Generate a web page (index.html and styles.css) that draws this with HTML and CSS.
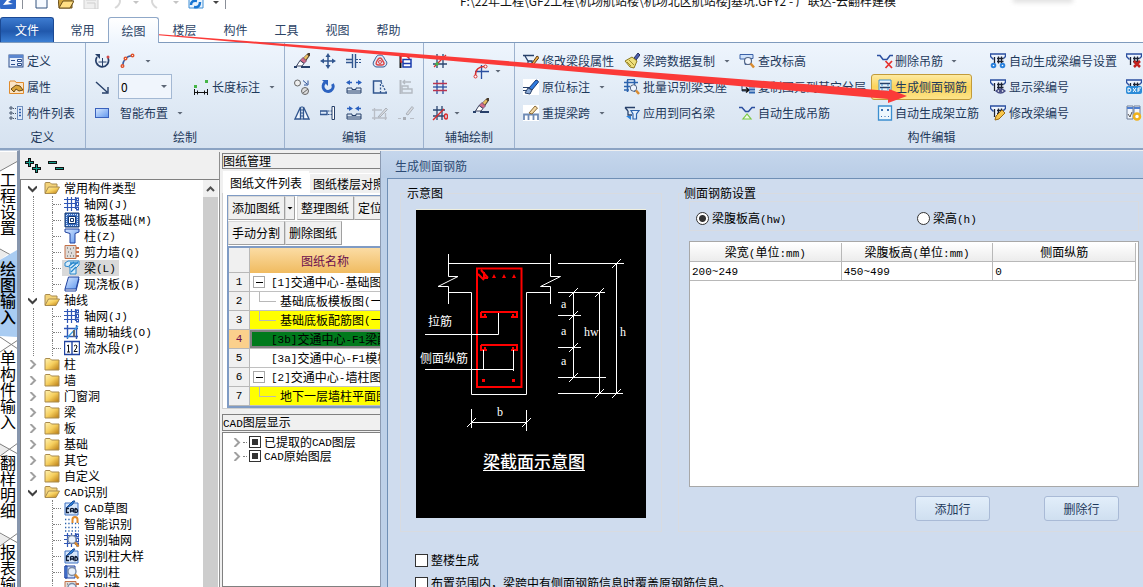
FILE: index.html
```html
<!DOCTYPE html>
<html lang="zh-CN">
<head>
<meta charset="utf-8">
<title>云翻样建模</title>
<link rel="stylesheet" href="styles.css">
</head>
<body>
<svg class="defs" aria-hidden="true">
  <defs>
    <linearGradient id="gGold" x1="0" y1="0" x2="1" y2="1"><stop offset="0" stop-color="#fff3b4"/><stop offset=".5" stop-color="#f6cf5e"/><stop offset="1" stop-color="#b87a12"/></linearGradient>
    <linearGradient id="gBlue" x1="0" y1="0" x2="1" y2="1"><stop offset="0" stop-color="#d8e8ff"/><stop offset="1" stop-color="#5f97ee"/></linearGradient>
  </defs>
  <symbol id="folder" viewBox="0 0 16 16"><path d="M1 3.500q0-1 1-1h4l1.500 1.500H15V14H1z" fill="url(#gGold)" stroke="#a98b4e"/></symbol>
  <symbol id="folder-open" viewBox="0 0 16 16"><path d="M1 13V3.500q0-1 1-1h4L7.500 4H13v3" fill="#f3d37a" stroke="#a98b4e"/><path d="M1 13.500 4.500 7H15.500L12 13.500z" fill="url(#gGold)" stroke="#a98b4e"/></symbol>
  <symbol id="define" viewBox="0 0 16 16"><rect x="1" y="2" width="14" height="12" fill="#e6eefb" stroke="#2d4f8c"/><path d="M1 3.500H15" stroke="#5b86cf" stroke-width="3"/><path d="M3 7.500H7M3 11.500H7" stroke="#2d4f8c"/><path d="M9.500 6.500h4v2h-4zM9.500 10.500h4v2h-4z" fill="#fff" stroke="#2d4f8c"/></symbol>
  <symbol id="prop" viewBox="0 0 16 16"><path d="M1.500 3V14.500H15.500V3.500H8L7 2H2z" fill="#fbe4c4" stroke="#e08b2c"/><path d="M3 10 8 6l4 1 3 4-4 1-3-2-2 3z" fill="#d9a43a" stroke="#6b4b18"/></symbol>
  <symbol id="list" viewBox="0 0 16 16"><path d="M2 2h2v2H2zM2 7h2v2H2zM2 12h2v2H2z" fill="none" stroke="#44546c"/><path d="M5 3.500h3M5 8.500h3M5 13.500h3" stroke="#44546c" stroke-dasharray="1 1"/><rect x="9.500" y="1.500" width="5" height="13" fill="#dfeafa" stroke="#6f8fbe"/><path d="M11 4.500h2M11 7.500h2M11 10.500h2" stroke="#2d5ca8" stroke-width="1.500"/></symbol>
  <symbol id="rotpt" viewBox="0 0 16 16"><path d="M3 4A6.300 6.300 0 1 0 14 5" fill="none" stroke="#27406a" stroke-width="1.700"/><path d="M1 1h5v5z" fill="#27406a"/><path d="M8.500 5v8M4.500 9h8" stroke="#27406a"/><circle cx="14" cy="4" r="1.500" fill="#d24c4c"/></symbol>
  <symbol id="arc" viewBox="0 0 16 16"><path d="M2.500 13.500C3 7 6 3 12.500 2.500" fill="none" stroke="#3c5da0" stroke-width="1.500"/><g fill="#fff" stroke="#e0532c" stroke-width="1.400"><circle cx="2.500" cy="13" r="1.300"/><circle cx="5.500" cy="5.500" r="1.300"/><circle cx="12.500" cy="2.500" r="1.300"/></g></symbol>
  <symbol id="line" viewBox="0 0 16 16"><path d="M2 3 13 13M14 8v6H8" fill="none" stroke="#27406a" stroke-width="1.400"/></symbol>
  <symbol id="rect" viewBox="0 0 16 16"><rect x="1.500" y="3.500" width="13" height="9" fill="url(#gBlue)" stroke="#3a62bd"/></symbol>
  <symbol id="dim" viewBox="0 0 16 16"><path d="M1.500 10v6M14.500 10v6M2 13.500h12M4.500 11.500v4M11.500 11.500v4" stroke="#111"/><path d="M1 6h3v3H1zM12 1h3v3h-3z" fill="#46b648"/></symbol>
  <symbol id="brush" viewBox="0 0 16 16"><path d="M0 14h3M7 14h9" stroke="#27406a" stroke-width="2"/><path d="M9 5 14 0h2v2.500L12 8z" fill="#4a3c2c"/><path d="M9.500 5 13 1.500l1.500 1.500L11.500 7z" fill="#e9bf62"/><path d="M6 7.500 9 4.500 12.500 8 10 10.500z" fill="#d46a86" stroke="#54406a" stroke-width=".700"/><path d="M6 7.500 2.500 13H8l2-2.500z" fill="#fff" stroke="#3c4560"/></symbol>
  <symbol id="move" viewBox="0 0 16 16"><path d="M8 2v12M2 8h12" stroke="#31568f" stroke-width="1.500"/><path d="M8 0 5.500 4h5zM8 16l-2.500-4h5zM0 8l4-2.500v5zM16 8l-4-2.500v5z" fill="#31568f"/></symbol>
  <symbol id="trim" viewBox="0 0 16 16"><path d="M6.500 1v14M9.500 1v14M0 6.500h6M0 9.500h6" stroke="#31568f" stroke-width="1.400"/><path d="M10 6.500h6M10 9.500h6" stroke="#31568f" stroke-dasharray="2 1"/></symbol>
  <symbol id="offset" viewBox="0 0 16 16"><path d="M8 2C12 2 12 6 14 8s0 6-3 6H5c-3 0-5-3-3-6S4 2 8 2z" fill="#dce9f8" stroke="#31568f"/><path d="M8 5c2 0 2 2 3.500 4s0 3-2 3h-3c-2 0-3-1-2-3S6 5 8 5z" fill="none" stroke="#e04343" stroke-width="1.400"/><circle cx="8" cy="9" r="1.500" fill="none" stroke="#e04343"/></symbol>
  <symbol id="align" viewBox="0 0 16 16"><path d="M2.500 0v15" stroke="#111" stroke-width="2"/><path d="M3 3h5l3 2v4H3z" fill="#fff" stroke="#e02a2a" stroke-width="1.500"/><path d="M5 6.500h8v7.500H5zM5 10.500h8" fill="#fff" stroke="#1a3cae" stroke-width="1.500"/></symbol>
  <symbol id="align-off" viewBox="0 0 16 16"><path d="M2.500 1v14" stroke="#b4bac2" stroke-width="2"/><path d="M5 3h8M7 1 5 3l2 2M4 7h6v3H4zM4 10h10v4H4z" fill="none" stroke="#b4bac2" stroke-width="1.400"/></symbol>
  <symbol id="copy" viewBox="0 0 16 16"><circle cx="3.500" cy="4" r="3" fill="#eee" stroke="#666"/><circle cx="11" cy="12" r="3.500" fill="#ddd" stroke="#666"/><path d="M9 14 14 10" stroke="#666"/><path d="M9 1.500 13 5M14 1.500V6H10" fill="none" stroke="#2d5196"/></symbol>
  <symbol id="rotate" viewBox="0 0 16 16"><path d="M5 3.500A5 5 0 1 0 12.500 5" fill="none" stroke="#2c62c0" stroke-width="3"/><path d="M2 1h6v6z" fill="#2c62c0"/></symbol>
  <symbol id="stretch" viewBox="0 0 16 16"><path d="M1 3.500h5M10 3.500h5" stroke="#2c62c0" stroke-width="1.500"/><path d="M0 3.500 4 1v5zM16 3.500 12 1v5z" fill="#2c62c0"/><path d="M1 9h5v1.500h4V9h5v5H1zM1 12h14" fill="none" stroke="#27406a"/></symbol>
  <symbol id="merge" viewBox="0 0 16 16"><path d="M1 3.500h4M11 3.500h4" stroke="#2c62c0" stroke-width="1.500"/><path d="M7 3.500 3 1v5zM9 3.500 13 1v5z" fill="#2c62c0"/><path d="M1 9h5v1.500h4V9h5v5H1zM1 12h14" fill="none" stroke="#27406a"/></symbol>
  <symbol id="slant" viewBox="0 0 16 16"><path d="M10 2H1.500V14H15" fill="none" stroke="#31568f" stroke-width="1.500"/><path d="M9 3 14.500 14M8.500 5v9" stroke="#31568f" stroke-dasharray="2 1.500" stroke-width="1.300"/></symbol>
  <symbol id="mirror" viewBox="0 0 16 16"><path d="M6.500 2v12H1zM9.500 2v12H15z" fill="#f3f8ff" stroke="#31568f" stroke-width="1.300"/><path d="M8 1v15" stroke="#31568f" stroke-dasharray="2 1"/></symbol>
  <symbol id="extend" viewBox="0 0 16 16"><path d="M0 6h7v3.500H0z" fill="#dce9f8" stroke="#31568f" stroke-width="1.400"/><path d="M8 6h4M8 9.500h4" stroke="#31568f" stroke-dasharray="1.500 1"/><path d="M12 1.500h2.500v13H12z" fill="#fff" stroke="#27406a"/></symbol>
  <symbol id="edit-off" viewBox="0 0 16 16"><path d="M0 5h10M0 13h15M2.500 3v12M13.500 8v7" stroke="#b9bec6" stroke-width="1.300"/><path d="M6 12 14 3l1.500 1.500L8 12z" fill="#d8dbe0" stroke="#aab0b9"/></symbol>
  <symbol id="pen-off" viewBox="0 0 16 16"><path d="M0 13.500h3M12 13.500h4" stroke="#b9bec6"/><path d="M5 12h3v3H5z" fill="#a9aeb6"/><path d="M8 9 14 1.500 15.500 3 10 10z" fill="#d8dbe0" stroke="#aab0b9"/></symbol>
  <symbol id="axis1" viewBox="0 0 16 16"><path d="M5 1v14M11 1v14M1 5h14M1 11h14" stroke="#2b4570" stroke-width="1.300"/><path d="M2 14 14 2" stroke="#d92d2d" stroke-width="1.300"/><circle cx="5" cy="11" r="1.700" fill="#46b648"/><circle cx="11" cy="5" r="1.700" fill="#46b648"/></symbol>
  <symbol id="axis2" viewBox="0 0 16 16"><path d="M5 1v14M11 1v14" stroke="#2b4fa0" stroke-width="1.300"/><path d="M1 4.500h14M1 11.500h14" stroke="#b93450" stroke-width="1.500"/><path d="M1 8h14" stroke="#2b4fa0" stroke-width="1.300"/></symbol>
  <symbol id="axis3" viewBox="0 0 16 16"><path d="M5 1v14M10 1v14M1 5h12M1 11h12" stroke="#2b4570" stroke-width="1.300"/><path d="M1 15 12 4" stroke="#d92d2d" stroke-width="1.500"/><ellipse cx="14" cy="11.500" rx="1.500" ry="2.500" fill="none" stroke="#d92d2d" stroke-width="1.400"/></symbol>
  <symbol id="axis4" viewBox="0 0 16 16"><path d="M8.500 2v14M2 8.500h14" stroke="#2b4fa0" stroke-width="1.300"/><path d="M2.500 13C2 7 6 3 12 3.500" fill="none" stroke="#d92d2d" stroke-width="1.400"/><circle cx="2.500" cy="13.500" r="1.500" fill="#fff" stroke="#d92d2d"/><circle cx="12.500" cy="3.500" r="1.500" fill="#fff" stroke="#d92d2d"/></symbol>
  <symbol id="beam-pen" viewBox="0 0 16 16"><path d="M0 2.500h11M2 3l3 5h4v6M5 8v6" fill="#a9dcf8" stroke="#27406a" stroke-width="1.300"/><path d="M7 13 14 3l2 1.500L9 13.500z" fill="#f0b04a" stroke="#5d3b14"/></symbol>
  <symbol id="mark-pen" viewBox="0 0 16 16"><path d="M0 0h16v16H0z" fill="#fff"/><path d="M6 9 13 1q2 0 2.500 2L9 11z" fill="#2e7be0" stroke="#17356e"/><path d="M0 8.500h6M0 11.500h5" stroke="#27406a" stroke-width="1.200"/><path d="M5 9l4 2-2 4-5-1z" fill="#8aa9d6" stroke="#27406a"/></symbol>
  <symbol id="span-pen" viewBox="0 0 16 16"><path d="M0 0h16v16H0z" fill="#fff"/><path d="M1 15V9.500h14V15M5.500 10v5M10.500 10v5" fill="none" stroke="#6f8bb5" stroke-width="1.800"/><path d="M6 8 12 1l2.500 2L9 9z" fill="#f3d9a4" stroke="#8b6a36"/></symbol>
  <symbol id="broom" viewBox="0 0 16 16"><path d="M10 5 14 0l2 2-4 5z" fill="#4b5fae" stroke="#27305e"/><path d="M1 8 8 4l5 4-3 7-4-1z" fill="#efe07c" stroke="#8d7a20"/><path d="M3 9l4 4M5 7l5 5" stroke="#a08c2e"/></symbol>
  <symbol id="beam-zoom" viewBox="0 0 16 16"><path d="M1 1.500h13v4H11v6H6V6H1z" fill="#cfe2fb" stroke="#3b62a8"/><circle cx="9" cy="8" r="3.500" fill="#f2f7ff" stroke="#566886" stroke-width="1.200"/><path d="M11.500 10.500 15 14.500" stroke="#d98b2f" stroke-width="2.500"/></symbol>
  <symbol id="batch" viewBox="0 0 16 16"><path d="M0 3.500h14M3 .500h8M3.500 1v12M10.500 1v12M0 7.500h6M0 11h5" stroke="#2b63ae" stroke-width="1.600" fill="none"/><circle cx="9.500" cy="9" r="3.200" fill="#eef5ff" stroke="#566886"/><path d="M12 11.500 15 15" stroke="#d98b2f" stroke-width="2.500"/></symbol>
  <symbol id="apply" viewBox="0 0 16 16"><path d="M1 2.500h10M1 2.500 4 6M4 6v4h4" fill="none" stroke="#27406a" stroke-width="1.300"/><path d="M7 5.500h8L12.500 9v5H9V9z" fill="#e3effd" stroke="#2b63ae" stroke-width="1.200"/><path d="M2 11l5 4v-4z" fill="#2b82dd"/></symbol>
  <symbol id="copy-floor" viewBox="0 0 16 16"><path d="M1 2h9v4H1zM3 6v6h5" fill="#e3effd" stroke="#27406a"/><path d="M3 11h6M7 8.500 10 11 7 13.500" fill="none" stroke="#111" stroke-width="1.500"/><path d="M10 7.500h6M10 10.500h6M10 13.500h6" stroke="#2b63ae" stroke-width="2"/></symbol>
  <symbol id="hanger" viewBox="0 0 16 16"><path d="M0 2.500h3l3.500 4h3L13 2.500h3" fill="none" stroke="#2b4fa0" stroke-width="1.500"/><path d="M8 9 4 14h8z" fill="#effae8" stroke="#7ac943" stroke-width="1.200"/></symbol>
  <symbol id="hanger-del" viewBox="0 0 16 16"><path d="M0 2.500h3l3 4h4L13 2.500h3" fill="none" stroke="#2b4fa0" stroke-width="1.500"/><path d="M8.500 8 15 15M15 8 8.500 15" stroke="#e5302c" stroke-width="1.700"/></symbol>
  <symbol id="side" viewBox="0 0 16 16"><path d="M2 1h12v14H2z" fill="#e9f4fd" stroke="#3b8fd0"/><path d="M3 4.500h10M3 8.500h10M4 12.500h8" stroke="#27406a" stroke-width="1.300"/><path d="M4 6h2M10 6h2M4 10h2M10 10h2" stroke="#3b8fd0"/></symbol>
  <symbol id="erect" viewBox="0 0 16 16"><path d="M1.500 1h13v14h-13z" fill="#eef7fd" stroke="#3b8fd0" stroke-width="1.300"/><path d="M4 4h2v2H4zM10 4h2v2h-2zM4 11h1v1H4zM7.500 11h1v1h-1zM11 11h1v1h-1z" fill="#3b6fb0"/></symbol>
  <symbol id="num" viewBox="0 0 16 16"><path d="M0 1h16v3l-3 3v4H3V7L0 4z" fill="#eef5fe"/><path d="M0 1h16M.500 1v2.500l3 3M15.500 1v2.500l-2 2" fill="none" stroke="#2b4fa0" stroke-width="1.400"/><path d="M4.500 4v8M8.500 3.500v7M11.500 3.500v7M7 5.500h6.500M7 8.500h6.500" stroke="#1b2233" stroke-width="1.300"/></symbol>
  <symbol id="gears" viewBox="0 0 16 16"><g fill="#fff" stroke="#2b82dd" stroke-width="2"><circle cx="3.500" cy="12.500" r="1.800"/><circle cx="12.500" cy="12.500" r="1.800"/></g></symbol>
  <symbol id="eye" viewBox="0 0 16 16"><path d="M6 12q4.500-4 9 0-4.500 4-9 0z" fill="#fff" stroke="#474d86" stroke-width="1.300"/><circle cx="10.500" cy="12" r="1.600" fill="#474d86"/></symbol>
  <symbol id="pencil" viewBox="0 0 16 16"><path d="M5 15l1-4 6-6 3 3-6 6z" fill="#f7c64c" stroke="#9a6b14"/></symbol>
  <symbol id="cross" viewBox="0 0 16 16"><path d="M8 8l6 6M14 8l-6 6" stroke="#c2211d" stroke-width="2.500"/></symbol>
  <symbol id="config" viewBox="0 0 16 16"><path d="M1 1h6v13H1zM8 1h6v9H8z" fill="#f2f6fc" stroke="#6f7f99"/><path d="M1 2h6v2H1zM8 2h6v2H8z" fill="#4f7fd0"/><path d="M2 9l2 3 2-5" fill="none" stroke="#555"/><circle cx="11" cy="11.500" r="3" fill="#fff" stroke="#f0b21c" stroke-width="2.500"/></symbol>
  <symbol id="t-grid" viewBox="0 0 16 16"><path d="M3.500 1v14M7.500 1v14M11.500 1v12M0 3.500h13M0 7.500h13M0 11.500h13" stroke="#2f56b5" stroke-width="1.200"/><g fill="#fff" stroke="#2f56b5"><rect x="12.500" y="2" width="2" height="3"/><rect x="12.500" y="6.500" width="2" height="3"/><rect x="12.500" y="11" width="2" height="3"/></g></symbol>
  <symbol id="t-raft" viewBox="0 0 16 16"><path d="M1 1h14v14H1z" fill="#3c70c2" stroke="#13366f"/><path d="M4.500 4.500h7v7h-7z" fill="#fff" stroke="#13366f"/><path d="M6.500 6.500h3v3h-3z" fill="#fff" stroke="#13366f"/><path d="M2.500 3v11M13.500 3v11M3 2.500h11M3 13.500h11" stroke="#d5e5fb" stroke-dasharray="1 1"/></symbol>
  <symbol id="t-col" viewBox="0 0 16 16"><path d="M1 1h14v3l-4 1.500V15H6V5.500L1 4z" fill="url(#gBlue)" stroke="#2143a0"/></symbol>
  <symbol id="t-wall" viewBox="0 0 16 16"><path d="M1 1.500h11v13H1z" fill="#dedbd8" stroke="#c4724a"/><path d="M3 4h1M6 5h1M9 4h1M4 8h1M7 9h1M3 12h1M9 12h1M6 12h1" stroke="#555"/><path d="M12 4h3M12 8h3M12 12h3" stroke="#c4724a" stroke-width="2"/></symbol>
  <symbol id="t-beam" viewBox="0 0 16 16"><path d="M1 3l3-2h11v4l-3 3v6H6V7L1 6z" fill="#d7edfb" stroke="#2786cc"/><path d="M5 6 10 2M7 8l7-6M7 12l5-5M6 3h8" stroke="#2786cc" stroke-width="1.300"/></symbol>
  <symbol id="t-slab" viewBox="0 0 16 16"><path d="M4.500 1H15l-3 12H1z" fill="url(#gBlue)" stroke="#2143a0"/><path d="M1 13v2h11l3-12" fill="none" stroke="#2143a0"/></symbol>
  <symbol id="t-page" viewBox="0 0 16 16"><path d="M1 2h10v12H1z" fill="#cfe0fa" stroke="#2143a0"/><path d="M1 2h2v12H1z" fill="#5f97ee" stroke="#2143a0"/></symbol>
  <symbol id="t-aux" viewBox="0 0 16 16"><path d="M3.500 1v14M12.500 1v14M0 4.500h14M0 12.500h14" stroke="#2f56b5" stroke-width="1.400"/><path d="M3 14 14 2" stroke="#3a9be0" stroke-width="1.300"/><path d="M9 6h2v7H9z" fill="#666"/></symbol>
  <symbol id="t-flow" viewBox="0 0 16 16"><path d="M.500 1.500h15v13H.500zM8 2v12" fill="#fff" stroke="#2143a0" stroke-width="1.400"/><path d="M4.500 5v7M3 6l1.500-1M3 12h3M10 6q2-2 3 0 0 2-3 5.500h3.500" fill="none" stroke="#111"/></symbol>
  <symbol id="t-cad" viewBox="0 0 16 16"><path d="M1 3h13v12H1z" fill="#d6e6fa" stroke="#3c70c2"/><path d="M2 8 9 1l2 0-3 4z" fill="#2b82dd" stroke="#1d4f9a"/><path d="M5 8.500H2.500v4H5M6.500 12.500V9l1.500-.500 1.500.500v3.500M6.500 11h3M11 8.500v4q3 0 2.500-2T11 8.500" fill="none" stroke="#0d1a33" stroke-width="1.300"/></symbol>
  <symbol id="t-smart" viewBox="0 0 16 16"><path d="M1 3.500h6M1 7.500h14M1 11.500h14M1 15h14" stroke="#2b63ae" stroke-width="1.300" stroke-dasharray="1.300 2"/><path d="M8.500 7V3.500a2.500 2.500 0 0 1 5 0V7" fill="none" stroke="#e08b2c" stroke-width="2"/></symbol>
  <symbol id="t-find" viewBox="0 0 16 16"><circle cx="8" cy="7.500" r="4" fill="#e9f2fd" stroke="#7b8ca6" stroke-width="1.400"/><path d="M11 10.500 14.500 14.500" stroke="#d98b2f" stroke-width="2.500"/></symbol>
  <symbol id="plus" viewBox="0 0 9 9"><path d="M3 0h3v3h3v3H6v3H3V6H0V3h3z" fill="#111"/><path d="M4.500 1v7M1 4.500h7" stroke="#159c8c"/></symbol>
</svg>

<header class="titlebar">
  <div class="quick">
    <svg class="i" viewBox="0 0 16 16"><rect width="16" height="17" rx="3" fill="#2f68c8"/><path d="M3 12 10 3l3 3-5 3 5 2z" fill="#fff"/></svg>
    <span class="bar"></span>
    <svg class="i" viewBox="0 0 16 16"><path d="M3 0h11v15H3z" fill="#f6faff" stroke="#33537f"/></svg>
    <svg class="i" viewBox="0 0 16 16"><path d="M0 4h6l2 2h6v9H1z" fill="#cfa43d" stroke="#6b501a"/><path d="M1 15 5 8h11l-4 7z" fill="#ffdf85" stroke="#6b501a"/></svg>
    <svg class="i" viewBox="0 0 16 16"><path d="M1 0h14v16H1zM4 10h8v6M3 7h10" fill="#efefef" stroke="#cfcfcf"/></svg>
    <svg class="i" viewBox="0 0 16 16"><path d="M3 6q8-4 9 2 0 4-5 7" fill="none" stroke="#d8d8d8" stroke-width="2"/></svg>
    <span class="caret pale"></span>
    <svg class="i" viewBox="0 0 16 16"><path d="M13 6Q5 2 4 8q0 4 5 7" fill="none" stroke="#d8d8d8" stroke-width="2"/></svg>
    <span class="caret pale"></span>
    <svg class="i" viewBox="0 0 16 16"><path d="M1 0h14v15H1z" fill="#e9f3fd" stroke="#3f8fd6"/><path d="M6 14q6 1 6-5M9 8q-6-1-6 4" fill="none" stroke="#1976d2" stroke-width="2.500"/></svg>
    <span class="caret dark"></span>
    <span class="bar"></span>
  </div>
  <div class="doc-title">F:\22年工程\GF2工程\机场航站楼\机场北区航站楼j基坑.GFY2 - 广联达-云翻样建模</div>
  <span class="smudge"></span>
</header>

<nav class="tabs">
  <button class="tab file">文件</button>
  <button class="tab">常用</button>
  <button class="tab on">绘图</button>
  <button class="tab">楼层</button>
  <button class="tab">构件</button>
  <button class="tab">工具</button>
  <button class="tab">视图</button>
  <button class="tab">帮助</button>
</nav>

<section class="ribbon">
  <div class="group g-define">
    <div class="cells">
      <button class="cmd"><svg class="i"><use href="#define"/></svg>定义</button>
      <button class="cmd"><svg class="i"><use href="#prop"/></svg>属性</button>
      <button class="cmd"><svg class="i"><use href="#list"/></svg>构件列表</button>
    </div>
    <div class="caption">定义</div>
  </div>
  <div class="group g-draw">
    <div class="cells">
      <button class="cmd" aria-label="旋转点"><svg class="i"><use href="#rotpt"/></svg></button>
      <button class="cmd" aria-label="弧"><svg class="i"><use href="#arc"/></svg><span class="caret"></span></button>
      <span></span>
      <button class="cmd" aria-label="直线"><svg class="i"><use href="#line"/></svg></button>
      <span class="combo"><select aria-label="半径"><option>0</option></select></span>
      <button class="cmd"><svg class="i"><use href="#dim"/></svg>长度标注<span class="caret"></span></button>
      <button class="cmd" aria-label="矩形"><svg class="i"><use href="#rect"/></svg></button>
      <button class="cmd">智能布置<span class="caret"></span></button>
      <span></span>
    </div>
    <div class="caption">绘制</div>
  </div>
  <div class="group g-edit">
    <div class="cells">
      <button class="ico" aria-label="格式刷"><svg class="i"><use href="#brush"/></svg></button>
      <button class="ico" aria-label="移动"><svg class="i"><use href="#move"/></svg></button>
      <button class="ico" aria-label="修剪"><svg class="i"><use href="#trim"/></svg></button>
      <button class="ico" aria-label="偏移"><svg class="i"><use href="#offset"/></svg></button>
      <button class="ico" aria-label="对齐"><svg class="i"><use href="#align"/></svg></button>
      <button class="ico" aria-label="复制"><svg class="i"><use href="#copy"/></svg></button>
      <button class="ico" aria-label="旋转"><svg class="i"><use href="#rotate"/></svg></button>
      <button class="ico" aria-label="打断"><svg class="i"><use href="#stretch"/></svg></button>
      <button class="ico" aria-label="拉伸"><svg class="i"><use href="#slant"/></svg></button>
      <button class="ico" aria-label="单对齐"><svg class="i"><use href="#align-off"/></svg></button>
      <button class="ico" aria-label="镜像"><svg class="i"><use href="#mirror"/></svg></button>
      <button class="ico" aria-label="延伸"><svg class="i"><use href="#extend"/></svg></button>
      <button class="ico" aria-label="合并"><svg class="i"><use href="#merge"/></svg></button>
      <button class="ico" aria-label="编辑"><svg class="i"><use href="#edit-off"/></svg></button>
      <button class="ico" aria-label="夹点"><svg class="i"><use href="#pen-off"/></svg></button>
    </div>
    <div class="caption">编辑</div>
  </div>
  <div class="group g-axis">
    <div class="split">
      <div class="stack">
        <button class="cmd" aria-label="两点辅轴"><svg class="i"><use href="#axis1"/></svg></button>
        <button class="cmd" aria-label="平行辅轴"><svg class="i"><use href="#axis2"/></svg></button>
        <button class="cmd" aria-label="点角辅轴"><svg class="i"><use href="#axis3"/></svg><span class="caret"></span></button>
      </div>
      <div class="stack tall">
        <button class="cmd" aria-label="弧形辅轴"><svg class="i"><use href="#axis4"/></svg><span class="caret"></span></button>
        <button class="cmd" aria-label="删除辅轴"><svg class="i"><use href="#brush"/></svg></button>
      </div>
    </div>
    <div class="caption">辅轴绘制</div>
  </div>
  <div class="group g-member">
    <div class="cells">
      <button class="cmd"><svg class="i"><use href="#beam-pen"/></svg>修改梁段属性</button>
      <button class="cmd"><svg class="i"><use href="#broom"/></svg>梁跨数据复制<span class="caret"></span></button>
      <button class="cmd"><svg class="i"><use href="#beam-zoom"/></svg>查改标高</button>
      <button class="cmd wide"><svg class="i"><use href="#hanger-del"/></svg>删除吊筋<span class="caret"></span></button>
      <button class="cmd"><svg class="i"><use href="#num"/><use href="#gears"/></svg>自动生成梁编号设置</button>
      <button class="cmd" aria-label="删除梁编号"><svg class="i"><use href="#num"/><use href="#cross"/></svg></button>
      <button class="cmd"><svg class="i"><use href="#mark-pen"/></svg>原位标注<span class="caret"></span></button>
      <button class="cmd"><svg class="i"><use href="#batch"/></svg>批量识别梁支座</button>
      <button class="cmd"><svg class="i"><use href="#copy-floor"/></svg>复制图元到其它分层</button>
      <button class="cmd wide on"><svg class="i"><use href="#side"/></svg>生成侧面钢筋</button>
      <button class="cmd"><svg class="i"><use href="#num"/><use href="#eye"/></svg>显示梁编号</button>
      <button class="cmd" aria-label="导出DXF"><svg class="i" viewBox="0 0 16 16"><use href="#num" width="16" height="16"/><rect y="7" width="16" height="8" rx="2" fill="#2b8bd8"/><path d="M2 9v4q3 0 3-2T2 9M7 9l3 4M10 9l-3 4M12 13V9h3M12 11h2" fill="none" stroke="#fff"/></svg></button>
      <button class="cmd"><svg class="i"><use href="#span-pen"/></svg>重提梁跨<span class="caret"></span></button>
      <button class="cmd"><svg class="i"><use href="#apply"/></svg>应用到同名梁</button>
      <button class="cmd"><svg class="i"><use href="#hanger"/></svg>自动生成吊筋</button>
      <button class="cmd wide"><svg class="i"><use href="#erect"/></svg>自动生成架立筋</button>
      <button class="cmd"><svg class="i"><use href="#num"/><use href="#pencil"/></svg>修改梁编号</button>
      <button class="cmd" aria-label="配置"><svg class="i"><use href="#config"/></svg></button>
    </div>
    <div class="caption">构件编辑</div>
  </div>
</section>

<main class="work">
  <nav class="vtabs">
    <svg class="vlines" width="18" height="440" viewBox="0 150 18 440"><path d="M0 152h18v9L0 171zM0 249l8 5-8 6zM0 443l10 6-10 6zM0 534l10 5-10 6z" fill="#ececec"/><path d="M18 161 0 171M0 249l18 10M0 337l18 12M18 340 0 352M0 444l18 10M18 443 0 456M0 533l18 10M18 533 0 546" fill="none" stroke="#808080"/></svg>
    <button class="vtab">工程设置</button>
    <button class="vtab on">绘图输入</button>
    <button class="vtab">单构件输入</button>
    <button class="vtab">翻样明细</button>
    <button class="vtab">报表输出</button>
  </nav>

  <aside class="members">
    <div class="mini-bar">
      <button class="pm" aria-label="展开"><svg width="16" height="15" viewBox="0 0 16 15"><use href="#plus" width="9" height="9"/><use href="#plus" x="7" y="6" width="9" height="9"/></svg></button>
      <button class="pm" aria-label="折叠"><svg width="16" height="15" viewBox="0 0 16 15"><path d="M0 3h9v3H0zM7 9h9v3H7z" fill="#111"/><path d="M1 4.500h7M8 10.500h7" stroke="#159c8c"/></svg></button>
    </div>
    <div class="tree-wrap">
      <ul class="tree">
        <li class="open"><div class="row"><svg class="chev" viewBox="0 0 9 9"><path d="M0 2.500 4.500 7 9 2.500" /></svg><svg class="i"><use href="#folder-open"/></svg>常用构件类型</div>
          <ul>
            <li><span class="leaf"><svg class="i"><use href="#t-grid"/></svg>轴网<i>(J)</i></span></li>
            <li><span class="leaf"><svg class="i"><use href="#t-raft"/></svg>筏板基础<i>(M)</i></span></li>
            <li><span class="leaf"><svg class="i"><use href="#t-col"/></svg>柱<i>(Z)</i></span></li>
            <li><span class="leaf"><svg class="i"><use href="#t-wall"/></svg>剪力墙<i>(Q)</i></span></li>
            <li><span class="leaf sel"><svg class="i"><use href="#t-beam"/></svg>梁<i>(L)</i></span></li>
            <li><span class="leaf"><svg class="i"><use href="#t-slab"/></svg>现浇板<i>(B)</i></span></li>
          </ul></li>
        <li class="open"><div class="row"><svg class="chev" viewBox="0 0 9 9"><path d="M0 2.500 4.500 7 9 2.500" /></svg><svg class="i"><use href="#folder-open"/></svg>轴线</div>
          <ul>
            <li><span class="leaf"><svg class="i"><use href="#t-grid"/></svg>轴网<i>(J)</i></span></li>
            <li><span class="leaf"><svg class="i"><use href="#t-aux"/></svg>辅助轴线<i>(O)</i></span></li>
            <li><span class="leaf"><svg class="i"><use href="#t-flow"/></svg>流水段<i>(P)</i></span></li>
          </ul></li>
        <li><div class="row"><svg class="chev shut" viewBox="0 0 9 9"><path d="M2.500 0 7 4.500 2.500 9"/></svg><svg class="i"><use href="#folder"/></svg>柱</div></li>
        <li><div class="row"><svg class="chev shut" viewBox="0 0 9 9"><path d="M2.500 0 7 4.500 2.500 9"/></svg><svg class="i"><use href="#folder"/></svg>墙</div></li>
        <li><div class="row"><svg class="chev shut" viewBox="0 0 9 9"><path d="M2.500 0 7 4.500 2.500 9"/></svg><svg class="i"><use href="#folder"/></svg>门窗洞</div></li>
        <li><div class="row"><svg class="chev shut" viewBox="0 0 9 9"><path d="M2.500 0 7 4.500 2.500 9"/></svg><svg class="i"><use href="#folder"/></svg>梁</div></li>
        <li><div class="row"><svg class="chev shut" viewBox="0 0 9 9"><path d="M2.500 0 7 4.500 2.500 9"/></svg><svg class="i"><use href="#folder"/></svg>板</div></li>
        <li><div class="row"><svg class="chev shut" viewBox="0 0 9 9"><path d="M2.500 0 7 4.500 2.500 9"/></svg><svg class="i"><use href="#folder"/></svg>基础</div></li>
        <li><div class="row"><svg class="chev shut" viewBox="0 0 9 9"><path d="M2.500 0 7 4.500 2.500 9"/></svg><svg class="i"><use href="#folder"/></svg>其它</div></li>
        <li><div class="row"><svg class="chev shut" viewBox="0 0 9 9"><path d="M2.500 0 7 4.500 2.500 9"/></svg><svg class="i"><use href="#folder"/></svg>自定义</div></li>
        <li><div class="row"><svg class="chev" viewBox="0 0 9 9"><path d="M0 2.500 4.500 7 9 2.500" /></svg><svg class="i"><use href="#folder-open"/></svg><i>CAD</i>识别</div>
          <ul>
            <li><span class="leaf"><svg class="i"><use href="#t-cad"/></svg><i>CAD</i>草图</span></li>
            <li><span class="leaf"><svg class="i"><use href="#t-smart"/></svg>智能识别</span></li>
            <li><span class="leaf"><svg class="i"><use href="#t-grid"/><use href="#t-find"/></svg>识别轴网</span></li>
            <li><span class="leaf"><svg class="i"><use href="#t-cad"/></svg>识别柱大样</span></li>
            <li><span class="leaf"><svg class="i"><use href="#t-page"/><use href="#t-find"/></svg>识别柱</span></li>
            <li><span class="leaf"><svg class="i"><use href="#t-wall"/><use href="#t-find"/></svg>识别墙</span></li>
          </ul></li>
      </ul>
      <div class="scroll"><svg width="15" height="17" viewBox="0 0 15 17"><path d="M4 11 7.500 7.500 11 11" fill="none" stroke="#505050" stroke-width="2"/></svg><div class="thumb"></div></div>
    </div>
  </aside>

  <section class="sheets">
    <h2 class="dock-title">图纸管理</h2>
    <div class="sheet-tabs"><button class="st on">图纸文件列表</button><button class="st">图纸楼层对照表</button></div>
    <div class="sheet-body">
      <div class="sheet-tools">
        <div class="tool-row"><button class="tb">添加图纸</button><button class="tb drop" aria-label="更多"><span class="caret black"></span></button><button class="tb gap">整理图纸</button><button class="tb">定位图纸</button></div>
        <div class="tool-row"><button class="tb">手动分割</button><button class="tb">删除图纸</button></div>
      </div>
      <table class="sheet-table">
        <thead><tr><th class="no"></th><th>图纸名称</th></tr></thead>
        <tbody>
          <tr><td class="no">1</td><td><span class="cell"><b class="minus"></b><i>[1]</i>交通中心<i>-</i>基础图</span></td></tr>
          <tr><td class="no">2</td><td><span class="cell sub">基础底板模板图<i>(</i>一<i>)</i></span></td></tr>
          <tr class="y"><td class="no">3</td><td><span class="cell sub">基础底板配筋图<i>(</i>一<i>)</i></span></td></tr>
          <tr class="g"><td class="no">4</td><td><span class="cell flat"><i>[3b]</i>交通中心<i>-F1</i>梁配筋图</span></td></tr>
          <tr><td class="no">5</td><td><span class="cell flat"><i>[3a]</i>交通中心<i>-F1</i>模板图</span></td></tr>
          <tr><td class="no">6</td><td><span class="cell"><b class="minus"></b><i>[2]</i>交通中心<i>-</i>墙柱图</span></td></tr>
          <tr class="y"><td class="no">7</td><td><span class="cell sub">地下一层墙柱平面图</span></td></tr>
        </tbody>
      </table>
    </div>
    <h2 class="dock-title"><i>CAD</i>图层显示</h2>
    <div class="layers">
      <label class="layer"><svg class="chev shut" viewBox="0 0 9 9"><path d="M2.500 0 7 4.500 2.500 9"/></svg><span class="dots"></span><input type="checkbox">已提取的<i>CAD</i>图层</label>
      <label class="layer"><svg class="chev shut" viewBox="0 0 9 9"><path d="M2.500 0 7 4.500 2.500 9"/></svg><span class="dots"></span><input type="checkbox"><i>CAD</i>原始图层</label>
    </div>
  </section>

  <section class="dialog">
    <h1 class="dlg-title">生成侧面钢筋</h1>
    <div class="dlg-body">
      <div class="panes">
        <fieldset class="pane fig">
          <legend>示意图</legend>
          <svg class="figure" viewBox="0 0 230 308" width="230" height="308">
            <rect width="230" height="308" fill="#000"/>
            <g fill="none" stroke="#fff">
              <path d="M32.500 53.500H134.500M32.500 44V66.500H42L22 76.500H32.500V94M134.500 44V66.500H144.500L124.500 76.500H134.500V94"/>
              <path d="M32.500 82.500H55.500V184.500H110.500V82.500H134.500"/>
              <path d="M142 53.500H208M200.500 53V184M142 82.500H189M157.500 82V168M183.500 82V184M142 105.500H165M142 137.500H165M142 167.500H190M142 183.500H207"/>
              <path d="M196 58l9-9M179 87l9-9M153 87l9-9M153 110l9-9M153 142l9-9M153 172l9-9M179 188l9-9M196 188l9-9"/>
              <path d="M55.500 199V218M110.500 200V221M55 212.500H111M51 217l9-9M106 217l9-9"/>
            </g>
            <g fill="none" stroke="red" stroke-width="2">
              <path d="M61 58.500H105.500V177H61zM62 64l6 6M65 60l7 8M68 62v6h4"/>
              <path d="M65 102H102M65 102v5h6M101 102v5h-6M65 135H102M65 135v5h6M101 135v5h-6"/>
            </g>
            <path d="M76 68l2-4 2 4zM86 68l2-4 2 4zM96 68l2-4 2 4zM66 169h3v3h-3zM96 169h3v3h-3zM68 104h2v3h-2zM96 104h2v3h-2zM68 137h2v3h-2zM96 137h2v3h-2z" fill="red"/>
            <path d="M82.500 103V124.500H9M67.500 140V159.500M97.500 140V161M9 159.500H98" fill="none" stroke="#fff"/>
            <g class="fig-text">
              <text x="12" y="116">拉筋</text><text x="4" y="153">侧面纵筋</text>
              <text x="145" y="98">a</text><text x="145" y="125">a</text><text x="145" y="155">a</text>
              <text x="168" y="126">hw</text><text x="204" y="126">h</text><text x="81" y="206">b</text>
            </g>
            <text class="fig-title" x="67" y="258">梁截面示意图</text>
            <path d="M67 260.500H169" stroke="#fff"/>
          </svg>
        </fieldset>
        <fieldset class="pane cfg">
          <legend>侧面钢筋设置</legend>
          <div class="radios">
            <label><input type="radio" name="mode" checked><span>梁腹板高<i>(hw)</i></span></label>
            <label><input type="radio" name="mode"><span>梁高<i>(h)</i></span></label>
          </div>
          <div class="grid-box">
            <table class="rules">
              <thead><tr><th>梁宽<i>(</i>单位<i>:mm)</i></th><th>梁腹板高<i>(</i>单位<i>:mm)</i></th><th class="third">侧面纵筋</th></tr></thead>
              <tbody><tr><td><i>200~249</i></td><td><i>450~499</i></td><td><i>0</i></td></tr></tbody>
            </table>
          </div>
          <div class="actions"><button class="act">添加行</button><button class="act">删除行</button></div>
        </fieldset>
      </div>
      <div class="checks">
        <label><input type="checkbox">整楼生成</label>
        <label><input type="checkbox">布置范围内，梁跨中有侧面钢筋信息时覆盖原钢筋信息。</label>
      </div>
    </div>
  </section>
</main>

<svg class="pointer" width="920" height="120" viewBox="0 0 920 120" aria-hidden="true"><path d="M150 33.500 830 86l59 5v-2l18 7-19 7v-4l-58-5L150 34.500z" fill="#fb3a38"/></svg>
</body>
</html>
```
FILE: styles.css
```css
* { box-sizing: border-box; }
html, body { height: 100%; }
body {
  margin: 0;
  display: flex;
  flex-direction: column;
  position: relative;
  overflow: hidden;
  background: #fff;
  color: #000;
  font: 12px/16px "Noto Sans CJK SC", sans-serif;
}
button, select, input { font: inherit; color: inherit; margin: 0; padding: 0; }
button { border: 0; background: none; white-space: nowrap; }
i { font: 11px/14px "Liberation Mono", monospace; }
.defs { position: absolute; width: 0; height: 0; }
.i { width: 16px; height: 16px; flex: none; }
.caret { flex: none; width: 6px; height: 3px; margin-left: 6px; background: #5c6675; clip-path: polygon(0 0, 100% 0, 50% 100%); }
.caret.pale { background: #c4c4c4; margin: 0; }
.caret.dark { background: #444; margin: 0; }
.caret.black { background: #000; margin: 0; }

.titlebar { flex: none; height: 26px; margin-top: -9px; display: flex; }
.quick { display: flex; align-items: flex-start; gap: 9px; width: 460px; padding-top: 2px; }
.quick .caret { margin-top: 8px; }
.bar { width: 1px; height: 16px; background: #8a8f98; margin: 0 1px 0 -3px; }
.doc-title { color: #111; white-space: nowrap; line-height: 20px; }
.smudge { margin-left: auto; margin-right: 70px; width: 60px; height: 12px; background: #e4e4e4; filter: blur(2px); }

.tabs { flex: none; display: flex; height: 25px; align-items: stretch; color: #2c4466; }
.tab { width: 51px; }
.tab.file { width: 54px; margin-right: 3px; color: #fff; background: linear-gradient(#3d7bd0, #2058ac 55%, #3b7fd4); border: 1px solid #1c4a94; border-bottom: 0; border-radius: 3px 3px 0 0; }
.tab.on { background: linear-gradient(#fff, #eef5fd); border: 1px solid #8fa8c8; border-bottom: 0; border-radius: 3px 3px 0 0; margin-bottom: -1px; z-index: 1; }

.ribbon { flex: none; display: flex; overflow: hidden; height: 108px; background: linear-gradient(#eef5fd, #e1ebf6 50%, #d6e2f0); border-top: 1px solid #7f9bbd; border-bottom: 2px solid #8ba3c3; color: #1e395b; }
.group { flex: none; padding-top: 5px; border-right: 1px solid #9db2ce; }
.cells { display: grid; grid-auto-rows: 26px; }
.caption { text-align: center; line-height: 22px; }
.cmd { display: flex; align-items: center; gap: 3px; padding: 0 1px; border: 1px solid transparent; border-radius: 3px; justify-self: start; }
.cmd.wide { padding: 0 4px 0 5px; gap: 2px; }
.cmd.on { background: linear-gradient(#fdeaa2, #fbd35a 50%, #fde489); border-color: #c29b3a; }
.ico { display: flex; align-items: center; justify-content: center; }
.g-define { width: 86px; }
.g-define .cells { padding-left: 6px; }
.g-draw { width: 199px; }
.g-draw .cells { padding-left: 6px; grid-template-columns: 26px 73px 1fr; }
.g-edit { width: 139px; }
.g-edit .cells { padding-left: 4px; grid-template-columns: repeat(5, 26px); }
.g-axis { width: 91px; }
.split { display: flex; padding-left: 6px; gap: 7px; }
.stack { display: grid; grid-auto-rows: 26px; width: 34px; }
.stack.tall { grid-template-rows: 36px 34px; padding-top: 5px; }
.stack .caret { margin-left: 3px; }
.g-member { padding-left: 6px; }
.g-member .cells { grid-template-columns: 101px 115px 134px 117px 136px 218px; }
.combo { position: relative; width: 54px; }
.combo select { width: 100%; height: 25px; padding: 0 2px; appearance: none; border: 1px solid #a3b8d3; border-radius: 0; background: #f0f5fc; color: #000; }
.combo::after { content: ""; position: absolute; right: 5px; top: 11px; width: 6px; height: 3px; background: #5c6675; clip-path: polygon(0 0, 100% 0, 50% 100%); }

.work { flex: 1; min-height: 0; display: flex; background: #f0f0f0; }
.vtabs { flex: none; width: 20px; position: relative; padding-top: 8px; background: #fff; border-right: 3px solid #8796ad; overflow: hidden; border-top: 1px solid #c8d4e4; }
.vlines { position: absolute; left: 0; top: -1px; }
.vtab { position: relative; display: block; width: 17px; padding: 12px 0 13px; font-size: 16px; line-height: 16px; white-space: normal; word-break: break-all; text-align: left; }
.vtab.on { background: #a9ccf2; font-weight: 500; clip-path: polygon(0 12px, 100% 2px, 100% 100%, 0 88px); }

.members { flex: none; width: 200px; display: flex; flex-direction: column; border-right: 1px solid #8e8e8e; margin-top: 2px; }
.mini-bar { flex: none; display: flex; height: 27px; gap: 7px; padding: 6px 5px; }
.pm { width: 16px; height: 15px; line-height: 0; }
.tree-wrap { flex: 1; min-height: 0; display: flex; background: #fff; border-top: 1px solid #808080; border-left: 1px solid #808080; padding-right: 1px; }
.tree { flex: 1; overflow: hidden; }
.tree, .tree ul { list-style: none; margin: 0; padding: 0; }
.tree li { position: relative; min-height: 16px; }
.row { display: flex; align-items: center; height: 16px; padding-left: 7px; }
.row .i { margin: 0 4px 0 7px; }
.row i, .leaf i, .cell i, .layer i { padding-top: 2px; }
.chev { width: 9px; height: 9px; flex: none; fill: none; stroke: #404040; stroke-width: 2; }
.chev.shut { stroke: #a0a0a0; }
.tree ul { margin-left: 31px; }
.tree > .open::before { content: ""; position: absolute; left: 12px; top: 16px; bottom: 0; border-left: 1px dotted #808080; }
.tree ul li { display: flex; height: 16px; align-items: center; }
.tree ul li::before { content: ""; align-self: stretch; border-left: 1px dotted #808080; }
.leaf { display: flex; align-items: center; height: 16px; }
.leaf::before { content: ""; width: 8px; border-top: 1px dotted #808080; }
.leaf .i { margin: 0 4px 0 3px; }
.leaf.sel { background: linear-gradient(90deg, #fff 9px, #d9d9d9 9px); padding-right: 3px; }
.scroll { width: 15px; background: #f0f0f0; display: flex; flex-direction: column; }
.thumb { flex: 1; background: #cdcdcd; }

.sheets { flex: none; width: 160px; padding: 3px 0 0 2px; overflow: hidden; display: flex; flex-direction: column; }
.dock-title { flex: none; margin: 0; font-size: 12px; font-weight: 400; line-height: 14px; border: 1px solid #808080; border-right: 0; white-space: nowrap; }
.dock-title i { line-height: 12px; }
.sheet-tabs { flex: none; display: flex; height: 22px; margin: 2px 0 0 1px; align-items: flex-end; }
.st { flex: none; height: 20px; padding: 0 3px; border: 1px solid #fff; border-bottom: 0; }
.st.on { height: 22px; padding: 0 6px; background: #fff; }
.sheet-body { flex: none; background: #fff; padding: 2px 0 0 4px; border-left: 1px solid #d0d0d0; border-bottom: 1px solid #d0d0d0; margin-bottom: 5px; }
.sheet-tools { border: 1px solid #7f9bc4; border-right: 0; border-bottom: 0; }
.tool-row { display: flex; height: 25px; }
.tb { flex: none; height: 24px; padding: 0 4px 0 3px; background: #f0f0f0; border: 1px solid #a0a0a0; border-left-color: #d8d8d8; border-top-color: #d8d8d8; }
.tb.drop { display: flex; align-items: center; padding: 0 1px; }
.tb.gap { margin-left: 2px; }
.sheet-table { border-collapse: separate; border-spacing: 0; table-layout: fixed; width: 300px; border: 2px solid #7f9bc4; }
.sheet-table th { height: 25px; padding: 0 125px 0 0; font-weight: 400; color: #6b0f4e; background: linear-gradient(#fbdca4, #f0bb60); }
.sheet-table .no { width: 21px; height: 19px; padding: 0; text-align: center; background: #f0f0f0; border-right: 1px solid #b8b8b8; border-bottom: 1px solid #b8b8b8; font: 11px/14px "Liberation Mono", monospace; }
.sheet-table td { height: 19px; padding: 0; border-bottom: 1px solid #c0c0c0; }
.cell { display: flex; align-items: center; height: 18px; padding-left: 3px; white-space: nowrap; position: relative; }
.minus { width: 12px; height: 12px; margin-right: 6px; border: 1px solid #a8a8a8; background: linear-gradient(#000, #000) center / 7px 1px no-repeat #fff; }
.cell.sub { padding-left: 30px; }
.cell.sub::before { content: ""; position: absolute; left: 9px; top: 0; width: 16px; height: 9px; border-left: 1px solid #b8b8b8; border-bottom: 1px solid #b8b8b8; }
.cell.flat { padding-left: 21px; }
.y td:last-child { background: #ff0; }
.g td:last-child { background: #007a1c; box-shadow: inset 0 0 0 2px #808080; }
.g .no { background: #fbd08c; color: #6b0f4e; }
.layers { flex: 1; background: #fff; border: 1px solid #808080; border-right: 0; margin-top: 1px; padding: 2px 0 0 9px; }
.layer { display: flex; align-items: center; height: 14px; line-height: 14px; white-space: nowrap; }
.layer i { line-height: 12px; }
.dots { width: 4px; border-top: 1px dotted #808080; margin: 0 2px; }
.layer input { appearance: none; flex: none; width: 12px; height: 12px; margin-right: 3px; border: 1px solid #333; background: #333 content-box; padding: 2px; }

.dialog { flex: 1; min-width: 0; margin-top: 1px; display: flex; flex-direction: column; background: #bdd0e8; border-left: 1px solid #8c9bb2; padding-left: 6px; }
.dlg-title { flex: none; margin: 0 0 0 -6px; padding-left: 14px; height: 27px; font-size: 12px; font-weight: 400; line-height: 30px; color: #2c4a73; background: linear-gradient(#c5d6ec, #b9cde6); }
.dlg-body { flex: 1; min-height: 0; overflow: hidden; background: #cfdcee; border-top: 1px solid #6f8fb5; border-left: 1px solid #6f8fb5; padding: 6px 0 0 12px; }
.panes { display: flex; gap: 16px; }
.pane { margin: 0; min-width: 0; border: 1px solid #d8dbe0; }
.pane legend { padding: 0 1px; line-height: 16px; }
.fig { flex: none; padding: 8px 15px 13px; }
.fig legend { margin-left: -10px; }
.figure { display: block; border-top: 1px solid #eeeedd; box-sizing: content-box; }
.fig-text { font: 12px "Liberation Serif", "Noto Sans CJK SC", serif; fill: #fff; }
.fig-title { font: 500 17px "Noto Sans CJK SC", sans-serif; fill: #fff; }
.cfg { flex: 1; border-right: 0; padding: 0 4px 10px 10px; display: flex; flex-direction: column; }
.cfg legend { margin-left: -6px; }
.radios { display: grid; grid-template-columns: 221px 1fr; height: 30px; margin-bottom: 10px; padding: 4px 0 0 6px; border: 1px solid #d8dbe0; }
.radios label { display: flex; align-items: center; gap: 3px; }
.radios input { appearance: none; width: 13px; height: 13px; border: 1px solid #333; border-radius: 50%; background: #fff; }
.radios input:checked { background: radial-gradient(circle, #333 3px, #fff 4px); }
.grid-box { height: 246px; background: #fff; border: 1px solid #a8a8a8; padding: 1px 2px 0 0; }
.rules { width: 100%; table-layout: fixed; border-collapse: separate; border-spacing: 0; }
.rules th { font-weight: 400; height: 19px; padding: 0; line-height: 16px; background: linear-gradient(#fff, #ececec); }
.rules td { height: 19px; padding: 0 2px; line-height: 14px; }
.rules th, .rules td { border-right: 1px solid #b8b8b8; border-bottom: 1px solid #b8b8b8; }
.rules .third { width: 32%; }
.actions { display: flex; justify-content: flex-end; gap: 54px; padding: 9px 20px 0 0; }
.act { width: 75px; height: 25px; color: #1e395b; border: 1px solid #a9bad6; border-radius: 3px; background: linear-gradient(#e2eefa, #cfdff0); }
.checks { display: grid; gap: 7px; padding: 20px 0 0 15px; }
.checks label { display: flex; align-items: center; gap: 3px; height: 16px; white-space: nowrap; }
.checks input { appearance: none; width: 13px; height: 13px; border: 1px solid #333; background: #fff; }

.pointer { position: absolute; left: 0; top: 0; pointer-events: none; }
```
